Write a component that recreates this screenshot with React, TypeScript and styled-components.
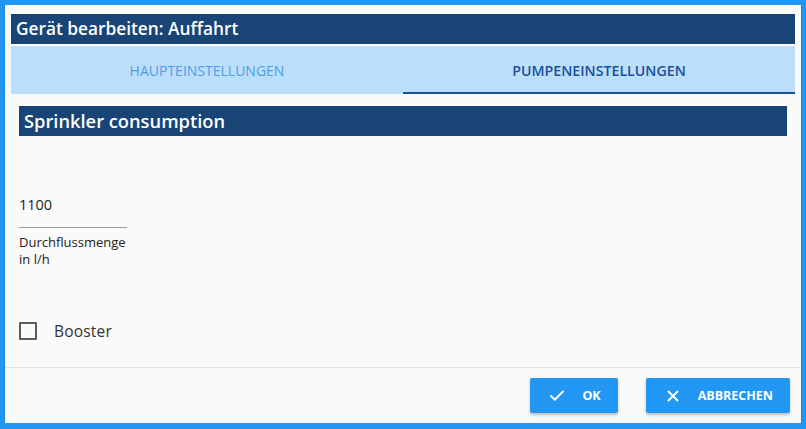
import styled, { createGlobalStyle } from 'styled-components';
import { Check, X } from 'lucide-react';

const GlobalStyle = createGlobalStyle`
  html, body {
    margin: 0;
    padding: 0;
    background: #2196f3;
  }
  body {
    font-family: 'Open Sans', 'Noto Sans', sans-serif;
  }
`;

const Dialog = styled.div`
  display: flex;
  flex-direction: column;
  box-sizing: border-box;
  margin: 5px 5px 0 5px;
  height: 418px;
  background: #fafafa;
  box-shadow: 0 1px 1px rgba(0, 0, 0, 0.7);
`;

const TitleBar = styled.div`
  margin: 9px 6px 0;
  height: 30px;
  line-height: 30px;
  padding-left: 5px;
  background: #184476;
  color: #fff;
  font-size: 17.3px;
  font-weight: 600;
`;

const TabBar = styled.div`
  margin: 2px 6px 0;
  height: 48px;
  display: grid;
  grid-template-columns: 1fr 1fr;
  background: #bbdefb;
`;

const Tab = styled.div<{ $active?: boolean }>`
  display: flex;
  align-items: center;
  justify-content: center;
  box-sizing: border-box;
  padding-top: 2px;
  border-bottom: 2px solid ${(p) => (p.$active ? '#1b4f9c' : 'transparent')};
  color: ${(p) => (p.$active ? '#1b4f9c' : '#4e9de6')};
  font-size: ${(p) => (p.$active ? '14.2px' : '14px')};
  font-weight: ${(p) => (p.$active ? 600 : 400)};
  text-transform: uppercase;
`;

const Content = styled.div`
  flex: 1;
  padding: 12px 14px 0;
`;

const SectionHeader = styled.div`
  height: 30px;
  line-height: 30px;
  padding-left: 5px;
  background: #184476;
  color: #fff;
  font-size: 18.3px;
  font-weight: 600;
`;

const Field = styled.div`
  width: 108px;
  margin-top: 56px;
`;

const FieldValue = styled.div`
  font-size: 14.5px;
  color: #222;
  height: 35px;
  line-height: 26px;
  border-bottom: 1px solid #9e9e9e;
`;

const FieldLabel = styled.div`
  margin-top: 6px;
  font-size: 13px;
  line-height: 17px;
  color: #222;
`;

const CheckRow = styled.label`
  display: flex;
  align-items: center;
  gap: 17px;
  margin-top: 52px;
  font-size: 15.5px;
  color: #333;
  letter-spacing: 0.2px;
`;

const Box = styled.span`
  box-sizing: border-box;
  width: 18px;
  height: 18px;
  border: 2px solid #5a5a5a;
  border-radius: 1px;
`;

const Footer = styled.div`
  display: flex;
  justify-content: flex-end;
  gap: 28px;
  height: 56px;
  box-sizing: border-box;
  padding: 10px 11px 0 0;
  border-top: 1px solid #e2e2e2;
`;

const Button = styled.button`
  display: flex;
  align-items: center;
  gap: 16px;
  height: 35px;
  padding: 0 17px 0 18px;
  border: none;
  border-radius: 2px;
  background: #2196f3;
  color: #fff;
  font-family: 'Open Sans', 'Noto Sans', sans-serif;
  font-size: 12.5px;
  font-weight: 700;
  box-shadow: 0 2px 3px rgba(0, 0, 0, 0.25);
`;

function App() {
  return (
    <>
      <GlobalStyle />
      <Dialog>
        <TitleBar>Gerät bearbeiten: Auffahrt</TitleBar>
        <TabBar>
          <Tab>Haupteinstellungen</Tab>
          <Tab $active>Pumpeneinstellungen</Tab>
        </TabBar>
        <Content>
          <SectionHeader>Sprinkler consumption</SectionHeader>
          <Field>
            <FieldValue>1100</FieldValue>
            <FieldLabel>
              Durchflussmenge
              <br />
              in l/h
            </FieldLabel>
          </Field>
          <CheckRow>
            <Box />
            Booster
          </CheckRow>
        </Content>
        <Footer>
          <Button>
            <Check size={18} strokeWidth={2.5} />
            OK
          </Button>
          <Button>
            <X size={18} strokeWidth={2.5} />
            ABBRECHEN
          </Button>
        </Footer>
      </Dialog>
    </>
  );
}

export default App;
